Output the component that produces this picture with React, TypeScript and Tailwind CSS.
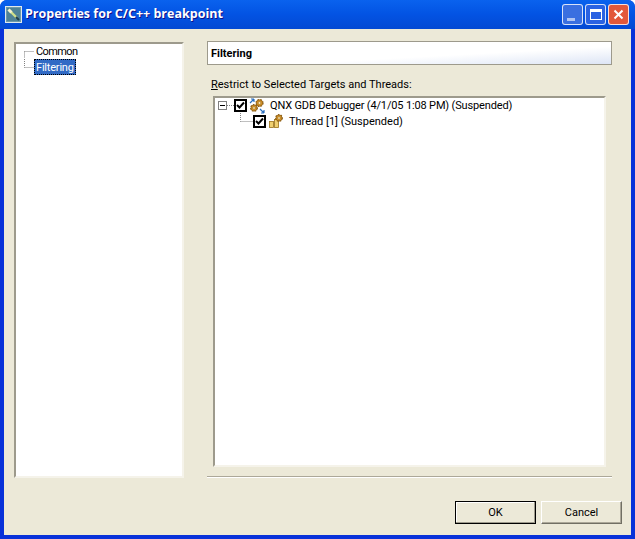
import React from "react";

const FONT = "[font-family:Roboto,sans-serif]";

const Gear = ({ x, y, r, fill = "#d09028" }: { x: number; y: number; r: number; fill?: string }) => (
  <g>
    <circle cx={x} cy={y} r={r + 0.3} fill="none" stroke="#8a5a10" strokeWidth="1.2" strokeDasharray="1.6 1.2" />
    <circle cx={x} cy={y} r={r} fill={fill} stroke="#8a5a10" strokeWidth="0.7" />
    <circle cx={x} cy={y} r={r * 0.4} fill="#fff3c4" stroke="#8a5a10" strokeWidth="0.4" />
  </g>
);

const AppIcon = () => (
  <svg width="17" height="17" viewBox="0 0 17 17" className="shrink-0">
    <rect x="0.5" y="0.5" width="16" height="16" fill="#6d9aa8" stroke="#dfe8ec" />
    <rect x="2" y="2" width="13" height="13" fill="#4f8296" />
    <path d="M5 5 L12 12" stroke="#cfe08a" strokeWidth="2.4" />
    <path d="M3.5 3.5 L6.5 6.5" stroke="#f4f4d0" strokeWidth="3" />
    <path d="M11 11 L14 14" stroke="#22404c" strokeWidth="2" />
  </svg>
);

const CheckBox = () => (
  <span className="flex h-[13px] w-[13px] shrink-0 items-center justify-center border-2 border-black bg-white">
    <svg width="9" height="9" viewBox="0 0 9 9">
      <path d="M1 4 L3.5 6.5 L8 1.5" fill="none" stroke="#000" strokeWidth="2" />
    </svg>
  </span>
);

const TreeLabel = ({
  children,
  selected,
  className = "",
}: {
  children: React.ReactNode;
  selected?: boolean;
  className?: string;
}) => (
  <span
    className={`flex h-[16px] items-center px-[2px] pt-[2px] text-[11px] whitespace-nowrap ${className} ${
      selected ? "bg-[#316ac5] text-white outline-1 -outline-offset-1 outline-dotted outline-black" : "text-black"
    }`}
  >
    {children}
  </span>
);

const Sunken = ({ className, children }: { className: string; children?: React.ReactNode }) => (
  <div className={`border-2 border-t-[#9d9a8c] border-l-[#9d9a8c] border-r-[#f5f3ea] border-b-[#f5f3ea] bg-white ${className}`}>
    {children}
  </div>
);

const Button = ({ children, primary }: { children: React.ReactNode; primary?: boolean }) => (
  <button
    className={`flex h-[23px] w-[81px] items-center justify-center bg-[#ece9d8] pt-[2px] text-[11px] text-black ${
      primary
        ? "border border-black shadow-[inset_-1px_-1px_0_#9d9a8c,inset_1px_1px_0_#fff]"
        : "border border-t-white border-l-white border-r-[#716f64] border-b-[#716f64] shadow-[inset_-1px_-1px_0_#aca899]"
    }`}
  >
    {children}
  </button>
);

const CaptionButton = ({ bg, children }: { bg: string; children: React.ReactNode }) => (
  <span className={`flex h-[21px] w-[21px] items-center justify-center rounded-[3px] border border-white/80 ${bg}`}>
    {children}
  </span>
);

export default function App() {
  return (
    <div className={`flex h-[539px] w-[635px] flex-col overflow-hidden rounded-t-[7px] bg-[#0831d9] ${FONT}`}>
      {/* title bar */}
      <div className="flex h-[29px] shrink-0 items-center bg-gradient-to-b from-[#0a62ee] via-[#0353e3] to-[#0349d3] pr-[6px] pl-[5px]">
        <AppIcon />
        <span className="ml-[3px] font-['Open_Sans',sans-serif] text-[12.5px] font-bold text-white [text-shadow:1px_1px_#0f1089]">
          Properties for C/C++ breakpoint
        </span>
        <div className="ml-auto flex gap-[2px]">
          <CaptionButton bg="bg-[#3a6fe0]">
            <span className="mt-[10px] mr-[4px] h-[3px] w-[8px] bg-white/60" />
          </CaptionButton>
          <CaptionButton bg="bg-[#2a62e2]">
            <span className="h-[11px] w-[12px] border border-t-[3px] border-white" />
          </CaptionButton>
          <CaptionButton bg="bg-[#e2583a]">
            <svg width="11" height="11" viewBox="0 0 11 11">
              <path d="M1.5 1.5 L9.5 9.5 M9.5 1.5 L1.5 9.5" stroke="#fff" strokeWidth="2" />
            </svg>
          </CaptionButton>
        </div>
      </div>

      {/* client area */}
      <div className="mx-1 mb-1 flex flex-1 flex-col bg-[#ece9d8]">
        <div className="flex flex-1 pt-3 pr-[19px] pl-[10px]">
          <Sunken className="mt-px h-[436px] w-[170px] pl-[8px]">
            <div className="flex h-[14px] items-center">
              <svg width="10" height="14" className="shrink-0">
                <path d="M0.5 7.5 H10 M0.5 7.5 V14" stroke="#808080" strokeDasharray="1 1" />
              </svg>
              <TreeLabel className="tracking-[-0.6px]">Common</TreeLabel>
            </div>
            <div className="mt-px flex h-[16px] items-center">
              <svg width="10" height="16" className="shrink-0">
                <path d="M0.5 0 V8.5 M0.5 8.5 H10" stroke="#808080" strokeDasharray="1 1" />
              </svg>
              <TreeLabel selected className="tracking-[-0.2px]">
                Filtering
              </TreeLabel>
            </div>
          </Sunken>

          <div className="ml-[23px] flex w-[405px] flex-col">
            <div className="flex h-[24px] items-center border border-[#9d9a8c] bg-gradient-to-br from-white from-60% to-[#dde5f5] pt-[2px] pl-[3px] text-[11px] font-bold text-black">
              Filtering
            </div>
            <div className="mt-[13px] ml-[4px] text-[11px] leading-[13px] text-black">
              <span className="underline">R</span>estrict to Selected Targets and Threads:
            </div>
            <Sunken className="mx-[6px] mt-[5px] h-[371px] pl-[3px]">
              <div className="flex h-[15px] items-center">
                <span className="flex h-[9px] w-[9px] items-center justify-center border border-[#808080]">
                  <span className="h-px w-[5px] bg-black" />
                </span>
                <svg width="7" height="2" className="shrink-0">
                  <path d="M0 0.5 H7" stroke="#808080" strokeDasharray="1 1" />
                </svg>
                <CheckBox />
                <svg width="16" height="16" viewBox="0 0 16 16" className="ml-[2px] shrink-0">
                  <Gear x={10.5} y={5} r={3.2} />
                  <Gear x={5} y={10} r={3} />
                  <path d="M1 5 L5 1 M5 1 H2 M5 1 V4" stroke="#2a6fc0" strokeWidth="1.2" fill="none" />
                  <path d="M11 11 L15 15 M15 15 H12 M15 15 V12" stroke="#2a6fc0" strokeWidth="1.2" fill="none" />
                </svg>
                <span className="ml-[3px]">
                  <TreeLabel className="tracking-[-0.15px]">QNX GDB Debugger (4/1/05 1:08 PM) (Suspended)</TreeLabel>
                </span>
              </div>
              <div className="flex h-[16px] items-center pl-[22px]">
                <svg width="13" height="16" className="shrink-0">
                  <path d="M0.5 0 V8.5 M0.5 8.5 H13" stroke="#808080" strokeDasharray="1 1" />
                </svg>
                <CheckBox />
                <svg width="16" height="16" viewBox="0 0 16 16" className="ml-[2px] shrink-0">
                  <rect x="1.5" y="8.5" width="4" height="6" fill="#f0d070" stroke="#9a7018" strokeWidth="0.8" />
                  <rect x="6.5" y="6.5" width="4" height="8" fill="#f0d070" stroke="#9a7018" strokeWidth="0.8" />
                  <Gear x={11} y={5} r={3} />
                </svg>
                <span className="ml-[3px]">
                  <TreeLabel>Thread [1] (Suspended)</TreeLabel>
                </span>
              </div>
            </Sunken>
            <div className="mt-[9px] h-[2px] border-t border-b border-t-[#aca899] border-b-white" />
          </div>
        </div>

        {/* buttons */}
        <div className="flex shrink-0 justify-end gap-[5px] pr-[9px] pb-[11px]">
          <Button primary>OK</Button>
          <Button>Cancel</Button>
        </div>
      </div>
    </div>
  );
}
